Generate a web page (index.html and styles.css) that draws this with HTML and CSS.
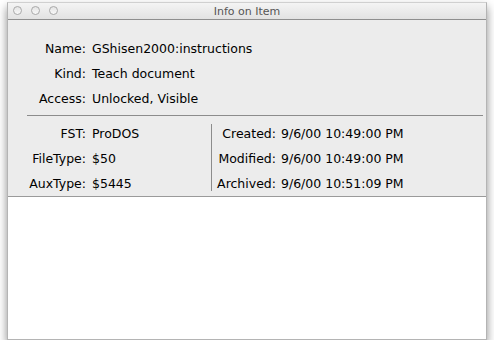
FILE: index.html
```html
<!DOCTYPE html>
<html lang="en">
<head>
    <meta charset="UTF-8">
    <title>Info on Item</title>
    <link rel="stylesheet" href="styles.css">
</head>
<body>
    <div class="window">
        <div class="titlebar">
            <div class="lights">
                <span class="light"></span>
                <span class="light"></span>
                <span class="light"></span>
            </div>
            <div class="title">Info on Item</div>
        </div>
        <div class="info">
            <div class="fields top">
                <span class="label">Name:</span><span class="value">GShisen2000:instructions</span>
                <span class="label">Kind:</span><span class="value">Teach document</span>
                <span class="label">Access:</span><span class="value">Unlocked, Visible</span>
            </div>
            <div class="rule"></div>
            <div class="columns">
                <div class="fields left">
                    <span class="label">FST:</span><span class="value">ProDOS</span>
                    <span class="label">FileType:</span><span class="value">$50</span>
                    <span class="label">AuxType:</span><span class="value">$5445</span>
                </div>
                <div class="divider"></div>
                <div class="fields right">
                    <span class="label">Created:</span><span class="value">9/6/00 10:49:00 PM</span>
                    <span class="label">Modified:</span><span class="value">9/6/00 10:49:00 PM</span>
                    <span class="label">Archived:</span><span class="value">9/6/00 10:51:09 PM</span>
                </div>
            </div>
        </div>
        <div class="blank"></div>
    </div>
</body>
</html>
```

FILE: styles.css
```css
/* Window */
body {
    margin: 0;
    padding: 2px 0 0 7px;
    background: #fff;
    font-family: 'DejaVu Sans', 'Liberation Sans', sans-serif;
    color: #000;
}
.window {
    width: 478px;
    height: 336px;
    border: 1px solid #b4b4b4;
    border-top-color: #d0d0d0;
    display: flex;
    flex-direction: column;
    box-shadow: 0 5px 9px rgba(0, 0, 0, 0.45);
    background: #fff;
}
.titlebar {
    position: relative;
    height: 16px;
    background: linear-gradient(to bottom, #f4f4f4, #e2e2e2);
    border-bottom: 1px solid #8e8e8e;
    display: flex;
    align-items: center;
    justify-content: center;
}
.lights {
    position: absolute;
    left: 5px;
    top: 3px;
    display: flex;
    gap: 9px;
}
.light {
    width: 7px;
    height: 7px;
    border: 1px solid #a9a9a9;
    border-radius: 50%;
    background: linear-gradient(to bottom, #e4e4e4, #f8f8f8);
}
.title {
    font-size: 11px;
    color: #555;
    padding-top: 1px;
}

/* Info area */
.info {
    background: #ececec;
    border-bottom: 1px solid #9a9a9a;
    height: 177px;
    padding-top: 16px;
    box-sizing: border-box;
}
.fields {
    display: grid;
    grid-template-columns: 78px auto;
    column-gap: 6px;
    font-size: 12.5px;
    line-height: 25px;
}
.label {
    text-align: right;
    white-space: nowrap;
}
.value {
    white-space: nowrap;
}
.rule {
    height: 1px;
    background: #8c8c8c;
    margin: 4px 3px 0 19px;
}
.columns {
    display: flex;
    padding-top: 5px;
}
.left {
    width: 203px;
}
.divider {
    width: 1px;
    height: 67px;
    margin-top: 3px;
    background: #8c8c8c;
}
.right {
    grid-template-columns: 64px auto;
    column-gap: 5px;
}
.blank {
    flex: 1;
    background: #fff;
}
```
